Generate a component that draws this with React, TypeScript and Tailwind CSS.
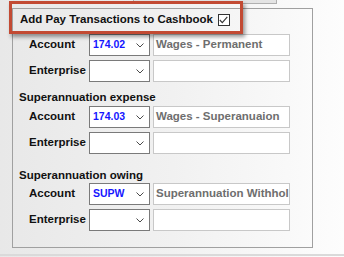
import React from 'react';

const font = { fontFamily: '"Liberation Sans", Arial, sans-serif' };

function Chevron() {
  return (
    <svg width="8" height="5" viewBox="0 0 8 5" className="mr-[5px]">
      <path d="M0.5 0.5 L4 4 L7.5 0.5" fill="none" stroke="#4a4a4a" strokeWidth="1" />
    </svg>
  );
}

function Row({ label, code, desc }: { label: string; code?: string; desc?: string }) {
  return (
    <div className="flex items-center h-[22px] pl-[16px]">
      <div className="w-[60px] text-[11.5px] font-bold text-[#111]">{label}</div>
      <div className="w-[61px] h-[22px] border border-[#7a7a7a] bg-white flex items-center justify-between pl-[3px]">
        <span className="text-[10.5px] font-bold text-[#1515ff]">{code}</span>
        <Chevron />
      </div>
      <div className="ml-[3px] w-[137px] h-[22px] border border-[#c8c8c8] bg-white flex items-center pl-[2px] overflow-hidden whitespace-nowrap">
        <span className="text-[11.5px] font-bold text-[#6e6e6e]">{desc}</span>
      </div>
    </div>
  );
}

export default function App() {
  return (
    <div
      className="relative w-[344px] h-[257px] overflow-hidden bg-gradient-to-r from-[#e8e8e8] via-[#f1f1f1] to-[#fdfdfd]"
      style={font}
    >
      {/* panel edge peeking from above */}
      <div className="ml-[133px] w-[144px] h-[4px] bg-[#e4e4e4] border-b border-x border-[#b0b0b0]" />

      <div className="ml-[12px] mt-[4px] w-[301px] h-[240px] border border-[#a0a0a0]">
        <div className="flex items-center h-[20px] mt-[1px] pl-[7px]">
          <span className="text-[11.5px] font-bold text-[#111]">Add Pay Transactions to Cashbook</span>
          <div className="ml-[5px] w-[12px] h-[12px] border border-[#333] bg-white flex items-center justify-center">
            <svg width="9" height="8" viewBox="0 0 9 8">
              <path d="M0.8 4 L3.3 6.6 L8.3 0.8" fill="none" stroke="#333" strokeWidth="1.1" />
            </svg>
          </div>
        </div>

        <div className="mt-[4px] flex flex-col gap-[4px]">
          <Row label="Account" code="174.02" desc="Wages - Permanent" />
          <Row label="Enterprise" />
        </div>

        <div className="mt-[8px] pl-[6px] h-[16px] flex items-center text-[11.5px] font-bold text-[#111]">
          Superannuation expense
        </div>
        <div className="flex flex-col gap-[4px]">
          <Row label="Account" code="174.03" desc="Wages - Superanuaion" />
          <Row label="Enterprise" />
        </div>

        <div className="mt-[15px] pl-[6px] h-[14px] flex items-center text-[11.5px] font-bold text-[#111]">
          Superannuation owing
        </div>
        <div className="flex flex-col gap-[4px]">
          <Row label="Account" code="SUPW" desc="Superannuation Withhol" />
          <Row label="Enterprise" />
        </div>
      </div>

      <div className="mt-[6px] h-[2px] bg-[#dadada]" />

      {/* annotation highlight */}
      <div className="absolute left-[9px] top-[1px] w-[234px] h-[33px] border-[3px] border-[#c24a33] shadow-[2px_3px_4px_rgba(0,0,0,0.4)]" />
    </div>
  );
}
